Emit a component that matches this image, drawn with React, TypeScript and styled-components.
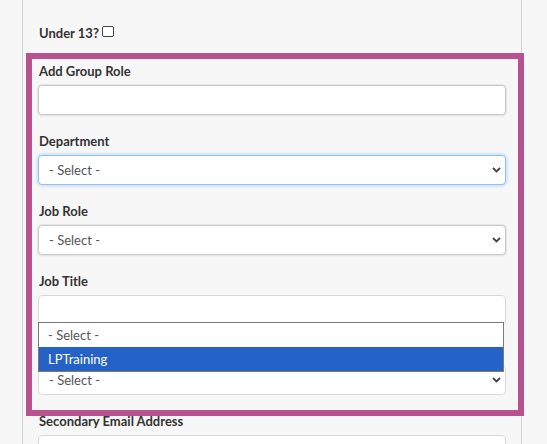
import React from "react";
import styled, { createGlobalStyle, css } from "styled-components";

const GlobalStyle = createGlobalStyle`
  html, body {
    margin: 0;
    height: 100%;
    overflow: hidden;
    background: #f7f7f7;
  }
  body {
    font-family: Lato, "Open Sans", sans-serif;
    color: #333;
  }
`;

const Panel = styled.div`
  box-sizing: border-box;
  margin-left: 22px;
  width: 500px;
  min-height: 100vh;
  padding: 25px 15px 0;
  background: #f7f7f7;
  border-left: 1px solid #d6d6d6;
  border-right: 1px solid #d6d6d6;
`;

const CheckRow = styled.div`
  display: flex;
  align-items: flex-start;
  font-size: 13px;
  font-weight: 700;
  line-height: 16px;
  padding-left: 1px;
`;

const Check = styled.input`
  appearance: none;
  box-sizing: border-box;
  width: 12px;
  height: 11px;
  margin: 1px 0 0 3px;
  border: 1px solid #444;
  border-radius: 2px;
  background: #fff;
`;

const Highlight = styled.section`
  display: flex;
  flex-direction: column;
  gap: 18px;
  margin: 12px -18px -3px -12px;
  padding: 4px 12px 15px 6px;
  border: 6px solid #b8528f;
  position: relative;
  z-index: 1;
`;

const Field = styled.div`
  display: flex;
  flex-direction: column;
  gap: 6px;
`;

const Label = styled.label`
  font-size: 13px;
  font-weight: 700;
  line-height: 16px;
  padding-left: 1px;
  color: #333;
`;

type Look = "ring" | "focus" | "plain";

const controlLook = css<{ $look: Look }>`
  box-sizing: border-box;
  width: 100%;
  height: 30px;
  margin: 0;
  padding: 0 10px;
  border-radius: 4px;
  background: #fff;
  font: 13px Lato, "Open Sans", sans-serif;
  color: #555;
  outline: none;
  ${({ $look }) =>
    $look === "ring"
      ? css`
          border: 1px solid #c9c9c9;
          box-shadow: 0 0 0 1px #e4e4e4, 0 1px 2px rgba(0, 0, 0, 0.1);
        `
      : $look === "focus"
      ? css`
          border: 1px solid #8fc3f2;
          box-shadow: 0 0 3px 1px rgba(120, 180, 240, 0.45);
        `
      : css`
          border: 1px solid #dadada;
        `}
`;

const TextInput = styled.input<{ $look: Look }>`
  ${controlLook}
`;

const SelectWrap = styled.div`
  position: relative;
`;

const Select = styled.select<{ $look: Look }>`
  ${controlLook}
  appearance: none;
`;

const Chevron = styled.svg`
  position: absolute;
  right: 5px;
  top: 12px;
  width: 9px;
  height: 6px;
  pointer-events: none;
`;

const Popup = styled.ul`
  position: absolute;
  top: 27px;
  left: 0;
  right: 2px;
  z-index: 5;
  margin: 0;
  padding: 0;
  list-style: none;
  background: #fff;
  border: 1px solid #7a7a7a;
`;

const Option = styled.li<{ $active?: boolean }>`
  height: 24px;
  line-height: 24px;
  padding-left: 9px;
  font-size: 13px;
  color: ${({ $active }) => ($active ? "#fff" : "#555")};
  background: ${({ $active }) => ($active ? "#2562c8" : "#fff")};
`;

const Below = styled.div`
  display: flex;
  flex-direction: column;
  gap: 6px;
`;

const ChevronIcon = () => (
  <Chevron viewBox="0 0 9 6">
    <path d="M1 1l3.5 3.5L8 1" fill="none" stroke="#444" strokeWidth="1.8" />
  </Chevron>
);

const SelectField = ({ label, look }: { label: string; look: Look }) => (
  <Field>
    <Label>{label}</Label>
    <SelectWrap>
      <Select $look={look} defaultValue="">
        <option value="">- Select -</option>
      </Select>
      <ChevronIcon />
    </SelectWrap>
  </Field>
);

export default function App() {
  return (
    <>
      <GlobalStyle />
      <Panel>
        <CheckRow>
          Under 13?
          <Check type="checkbox" />
        </CheckRow>
        <Highlight>
          <Field>
            <Label>Add Group Role</Label>
            <TextInput $look="ring" />
          </Field>
          <SelectField label="Department" look="focus" />
          <SelectField label="Job Role" look="ring" />
          <Field>
            <Label>Job Title</Label>
            <SelectWrap>
              <TextInput $look="plain" />
              <Popup>
                <Option>- Select -</Option>
                <Option $active>LPTraining</Option>
              </Popup>
            </SelectWrap>
          </Field>
          <SelectField label="Location" look="plain" />
        </Highlight>
        <Below>
          <Label>Secondary Email Address</Label>
          <TextInput $look="plain" />
        </Below>
      </Panel>
    </>
  );
}
